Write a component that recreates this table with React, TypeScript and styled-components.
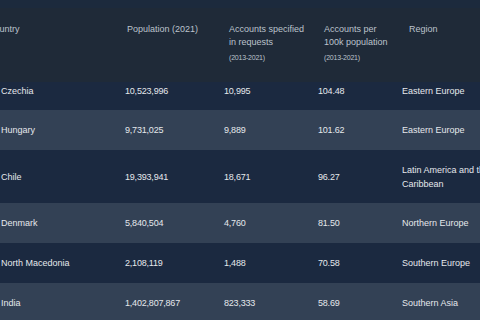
import React from 'react'
import styled, { createGlobalStyle } from 'styled-components'

const GlobalStyle = createGlobalStyle`
  html, body {
    margin: 0;
    padding: 0;
    background: #1e293b;
  }
  body {
    font-family: "Liberation Sans", Arial, sans-serif;
  }
`

type Row = {
  country: string
  population: string
  accounts: string
  per100k: string
  region: string
}

const rows: Row[] = [
  { country: 'Czechia', population: '10,523,996', accounts: '10,995', per100k: '104.48', region: 'Eastern Europe' },
  { country: 'Hungary', population: '9,731,025', accounts: '9,889', per100k: '101.62', region: 'Eastern Europe' },
  { country: 'Chile', population: '19,393,941', accounts: '18,671', per100k: '96.27', region: 'Latin America and the Caribbean' },
  { country: 'Denmark', population: '5,840,504', accounts: '4,760', per100k: '81.50', region: 'Northern Europe' },
  { country: 'North Macedonia', population: '2,108,119', accounts: '1,488', per100k: '70.58', region: 'Southern Europe' },
  { country: 'India', population: '1,402,807,867', accounts: '823,333', per100k: '58.69', region: 'Southern Asia' },
]

const App = () => {
  return (
    <>
      <GlobalStyle />
      <Page>
        <Strip />
        <Table>
          <Head>
            <HeadCell $indent={-12}>Country</HeadCell>
            <HeadCell $indent={3}>Population (2021)</HeadCell>
            <HeadCell $indent={6}>
              Accounts specified in requests
              <Sub>(2013-2021)</Sub>
            </HeadCell>
            <HeadCell $indent={7}>
              Accounts per 100k population
              <Sub>(2013-2021)</Sub>
            </HeadCell>
            <HeadCell $indent={8}>Region</HeadCell>
          </Head>
          {rows.map((r, i) => (
            <BodyRow key={r.country} $alt={i % 2 === 1} $partial={i === 0}>
              <Cell>{r.country}</Cell>
              <Num>{r.population}</Num>
              <Num>{r.accounts}</Num>
              <Num>{r.per100k}</Num>
              <Cell>{r.region}</Cell>
            </BodyRow>
          ))}
        </Table>
      </Page>
    </>
  )
}

export default App

const Page = styled.div`
  width: 480px;
  height: 320px;
  overflow: hidden;
  background: #1e293b;
`
const Strip = styled.div`
  height: 8px;
  background: #1c2a3d;
`
const Table = styled.div`
  width: 511px;
`
const columns = '124px 99px 94px 84px 110px'

const Head = styled.div`
  display: grid;
  grid-template-columns: ${columns};
  height: 74px;
  box-sizing: border-box;
  padding-top: 15px;
  background: #1f2a38;
  color: #bcc3cc;
  font-size: 9px;
  line-height: 13px;
`
const HeadCell = styled.div<{ $indent: number }>`
  padding-left: ${(p) => Math.max(p.$indent, 0)}px;
  padding-right: 12px;
  text-indent: ${(p) => Math.min(p.$indent, 0)}px;
  white-space: normal;
`
const Sub = styled.div`
  font-size: 7px;
  line-height: 11px;
  margin-top: 3px;
  letter-spacing: -0.2px;
`
const BodyRow = styled.div<{ $alt: boolean; $partial: boolean }>`
  display: grid;
  grid-template-columns: ${columns};
  align-items: ${(p) => (p.$partial ? 'start' : 'center')};
  box-sizing: border-box;
  min-height: ${(p) => (p.$partial ? 28 : 40)}px;
  padding: ${(p) => (p.$partial ? '2px 0 0' : '12.5px 0')};
  background: ${(p) => (p.$alt ? '#334155' : '#1b2940')};
  color: #e5e8ec;
  font-size: 9px;
  line-height: 14px;
`
const Cell = styled.div`
  padding-left: 1px;
`
const Num = styled(Cell)`
  letter-spacing: -0.2px;
`
